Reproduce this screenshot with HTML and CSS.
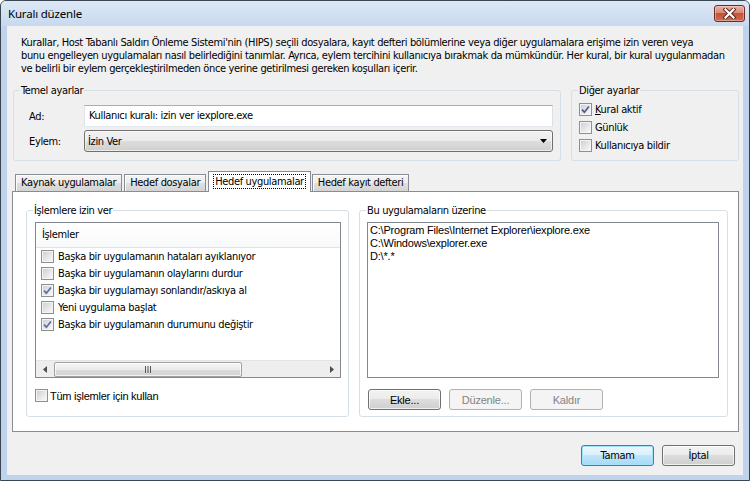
FILE: index.html
```html
<!DOCTYPE html>
<html lang="tr">
<head>
<meta charset="utf-8">
<title>Kuralı düzenle</title>
<link rel="stylesheet" href="styles.css">
</head>
<body>
<div class="window">
  <div class="titlebar">
    <span class="title">Kuralı düzenle</span>
    <span class="close">
      <svg width="15" height="11" viewBox="0 0 15 11"><path d="M3.5 1.5 L11.5 9.5 M11.5 1.5 L3.5 9.5" stroke="#5a211b" stroke-width="4" stroke-linecap="square" fill="none"/><path d="M3.5 1.5 L11.5 9.5 M11.5 1.5 L3.5 9.5" stroke="#ffffff" stroke-width="2.2" stroke-linecap="square" fill="none"/></svg>
    </span>
  </div>
  <div class="client">
    <p class="desc">Kurallar, Host Tabanlı Saldırı Önleme Sistemi'nin (HIPS) seçili dosyalara, kayıt defteri bölümlerine veya diğer uygulamalara erişime izin veren veya<br>bunu engelleyen uygulamaları nasıl belirlediğini tanımlar. Ayrıca, eylem tercihini kullanıcıya bırakmak da mümkündür. Her kural, bir kural uygulanmadan<br>ve belirli bir eylem gerçekleştirilmeden önce yerine getirilmesi gereken koşulları içerir.</p>

    <div class="toprow">
      <fieldset class="group basic">
        <legend>Temel ayarlar</legend>
        <div class="basic-body">
          <div class="frow">
            <span class="flabel">Ad:</span>
            <div class="textbox">Kullanıcı kuralı: izin ver iexplore.exe</div>
          </div>
          <div class="frow">
            <span class="flabel">Eylem:</span>
            <div class="combo">
              <span class="combo-text">İzin Ver</span>
              <svg class="combo-arrow" width="8" height="5" viewBox="0 0 8 5"><path d="M0 0 H7 L3.5 4 Z" fill="#000"/></svg>
            </div>
          </div>
        </div>
      </fieldset>
      <fieldset class="group other">
        <legend>Diğer ayarlar</legend>
        <div class="other-body">
          <div class="check"><span class="cb"><svg width="11" height="11" viewBox="0 0 11 11"><path d="M2 5.6 L4.4 8.2 L8.9 2.4" fill="none" stroke="#4b5e8e" stroke-width="1.7"/></svg></span><span><u>K</u>ural aktif</span></div>
          <div class="check"><span class="cb"></span><span>Günlük</span></div>
          <div class="check"><span class="cb"></span><span>Kullanıcıya bildir</span></div>
        </div>
      </fieldset>
    </div>

    <div class="tabs">
      <div class="tab">Kaynak uygulamalar</div>
      <div class="tab">Hedef dosyalar</div>
      <div class="tab active"><span class="focus">Hedef uygulamalar</span></div>
      <div class="tab">Hedef kayıt defteri</div>
    </div>
    <div class="tabpanel">
      <fieldset class="group ops">
        <legend>İşlemlere izin ver</legend>
        <div class="ops-body">
          <div class="listview">
            <div class="lv-header">İşlemler</div>
            <ul class="lv-items">
              <li><span class="cb"></span>Başka bir uygulamanın hataları ayıklanıyor</li>
              <li><span class="cb"></span>Başka bir uygulamanın olaylarını durdur</li>
              <li><span class="cb"><svg width="11" height="11" viewBox="0 0 11 11"><path d="M2 5.6 L4.4 8.2 L8.9 2.4" fill="none" stroke="#5d6f9c" stroke-width="1.7"/></svg></span>Başka bir uygulamayı sonlandır/askıya al</li>
              <li><span class="cb"></span>Yeni uygulama başlat</li>
              <li><span class="cb"><svg width="11" height="11" viewBox="0 0 11 11"><path d="M2 5.6 L4.4 8.2 L8.9 2.4" fill="none" stroke="#5d6f9c" stroke-width="1.7"/></svg></span>Başka bir uygulamanın durumunu değiştir</li>
            </ul>
            <div class="hscroll">
              <span class="sb-arrow"><svg width="4" height="7" viewBox="0 0 4 7"><path d="M4 0 V7 L0 3.5 Z" fill="#4d4d4d"/></svg></span>
              <span class="sb-thumb"><svg width="8" height="7" viewBox="0 0 8 7"><path d="M1.5 0 V7 M4 0 V7 M6.5 0 V7" stroke="#555" stroke-width="1"/></svg></span>
              <span class="sb-track"></span>
              <span class="sb-arrow"><svg width="4" height="7" viewBox="0 0 4 7"><path d="M0 0 V7 L4 3.5 Z" fill="#4d4d4d"/></svg></span>
            </div>
          </div>
          <div class="check all"><span class="cb"></span><span>Tüm işlemler için kullan</span></div>
        </div>
      </fieldset>
      <fieldset class="group apps">
        <legend>Bu uygulamaların üzerine</legend>
        <div class="apps-body">
          <div class="listbox">
            <div>C:\Program Files\Internet Explorer\iexplore.exe</div>
            <div>C:\Windows\explorer.exe</div>
            <div>D:\*.*</div>
          </div>
          <div class="btnrow">
            <button class="btn sans">Ekle...</button>
            <button class="btn sans disabled">Düzenle...</button>
            <button class="btn sans disabled">Kaldır</button>
          </div>
        </div>
      </fieldset>
    </div>

    <div class="dlgbtns">
      <button class="btn default">Tamam</button>
      <button class="btn">İptal</button>
    </div>
  </div>
</div>
</body>
</html>
```

FILE: styles.css
```css
* { box-sizing: border-box; }
html, body { margin: 0; padding: 0; }
body {
  width: 750px;
  height: 481px;
  overflow: hidden;
  background: #ffffff;
  font-family: "DejaVu Sans Condensed", "DejaVu Sans", sans-serif;
  font-stretch: semi-condensed;
  font-size: 11px;
  letter-spacing: -0.35px;
  color: #000;
}

.window {
  width: 750px;
  height: 481px;
  border: 1px solid #3a4554;
  border-radius: 6px 6px 0 0;
  background: #bfd3ec;
  display: flex;
  flex-direction: column;
}

.titlebar {
  height: 25px;
  flex: none;
  display: flex;
  align-items: flex-start;
  padding: 0 4px 0 7px;
  background: linear-gradient(#dde8f5, #c8d9ee);
  border-radius: 5px 5px 0 0;
}
.title {
  font-family: "Noto Sans", "Open Sans", sans-serif;
  font-stretch: normal;
  font-size: 11.5px;
  letter-spacing: -0.2px;
  line-height: 25px;
}
.close {
  margin-left: auto;
  margin-top: 4px;
  width: 31px;
  height: 17px;
  border: 1px solid #6d2d26;
  border-radius: 3px;
  background: linear-gradient(#eab0a3, #d98a78 45%, #c4533b 50%, #cf6a52);
  box-shadow: inset 0 0 0 1px rgba(255, 220, 210, 0.45);
  display: flex;
  align-items: center;
  justify-content: center;
}

.client {
  flex: 1;
  margin: 0 6px 5px;
  background: #f0f0f0;
  display: flex;
  flex-direction: column;
}

.desc {
  margin: 10px 14px 0;
  line-height: 13px;
  white-space: nowrap;
}

/* group boxes */
.group {
  margin: 0;
  padding: 0;
  border: 1px solid #d5dfe5;
  border-radius: 3px;
  min-width: 0;
}
.group legend {
  margin-left: 6px;
  padding: 0 1px;
  line-height: 13px;
}

.toprow {
  display: flex;
  gap: 10px;
  margin: 9px 4px 0 6px;
}
.basic { flex: 1; }
.basic-body {
  padding: 8px 7px 8px 15px;
  display: flex;
  flex-direction: column;
  gap: 3px;
}
.frow {
  display: flex;
  align-items: center;
  height: 22px;
}
.flabel { width: 55px; flex: none; }
.textbox {
  flex: 1;
  height: 22px;
  border: 1px solid;
  border-color: #abadb3 #dbdfe6 #e3e9ef #e2e3ea;
  background: #fff;
  padding: 0 4px;
  line-height: 20px;
}
.combo {
  flex: 1;
  height: 22px;
  border: 1px solid #707070;
  border-radius: 3px;
  background: linear-gradient(#f2f2f2, #ebebeb 50%, #dddddd 50%, #cfcfcf);
  box-shadow: inset 0 0 0 1px rgba(255, 255, 255, 0.6);
  display: flex;
  align-items: center;
  padding: 0 4px 0 3px;
}
.combo-text { flex: 1; }
.combo-arrow { display: block; }

.other { width: 168px; flex: none; }
.other-body { padding: 3px 7px 0; }

.check {
  display: flex;
  align-items: center;
  gap: 3px;
  height: 18px;
}
.cb {
  width: 13px;
  height: 13px;
  flex: none;
  border: 1px solid #8e8f8f;
  background: linear-gradient(135deg, #c9ccd2, #eeeeef 70%, #fafafa);
  box-shadow: inset 0 0 0 1px #f4f4f4;
  display: flex;
  align-items: center;
  justify-content: center;
}
.cb svg { display: block; }

/* tabs */
.tabs {
  display: flex;
  align-items: flex-end;
  height: 20px;
  margin: 10px 4px 0 5px;
  padding-left: 3px;
  gap: 2px;
  position: relative;
  z-index: 1;
}
.tab {
  height: 17px;
  border: 1px solid #898c95;
  border-bottom: none;
  padding: 0 5px;
  line-height: 16px;
  background: linear-gradient(#f4f4f4, #ececec 50%, #e0e0e0 50%, #d4d4d4);
  box-shadow: inset 1px 1px 0 #fcfcfc;
  white-space: nowrap;
}
.tab.active {
  height: 21px;
  margin: 0 -1px -1px 0;
  padding: 2px 4px 0;
  background: #fff;
  box-shadow: none;
}
.focus {
  display: block;
  border: 1px dotted #000;
  line-height: 13px;
  padding: 0 1px;
}

.tabpanel {
  height: 241px;
  margin: 0 4px 0 5px;
  border: 1px solid #898c95;
  background: #fff;
  display: flex;
  gap: 10px;
  padding: 12px 10px 14px 13px;
}
.ops { width: 323px; flex: none; }
.apps { flex: 1; }
.ops-body { padding: 5px 7px 0 8px; }
.apps-body { padding: 5px 8px 0 7px; }

.listview {
  height: 156px;
  border: 1px solid #828790;
  background: #fff;
  display: flex;
  flex-direction: column;
}
.lv-header {
  height: 25px;
  flex: none;
  padding-left: 6px;
  line-height: 24px;
  border-bottom: 1px solid #e2e3e5;
  background: linear-gradient(#ffffff, #f8f9fa);
}
.lv-items {
  flex: 1;
  list-style: none;
  margin: 0;
  padding: 0 0 0 5px;
}
.lv-items li {
  height: 17px;
  display: flex;
  align-items: center;
  gap: 4px;
  white-space: nowrap;
}
.hscroll {
  height: 17px;
  flex: none;
  display: flex;
  align-items: center;
  background: #eeeeee;
  border-top: 1px solid #e4e4e4;
}
.sb-arrow {
  width: 17px;
  height: 16px;
  display: flex;
  align-items: center;
  justify-content: center;
}
.sb-thumb {
  width: 188px;
  height: 15px;
  margin-left: 1px;
  border: 1px solid #9ea1a6;
  border-radius: 2px;
  background: linear-gradient(#f6f6f6, #eaeaea 50%, #dcdcdc 50%, #d3d3d3);
  box-shadow: inset 0 0 0 1px rgba(255, 255, 255, 0.7);
  display: flex;
  align-items: center;
  justify-content: center;
}
.sb-thumb svg { display: block; }
.sb-track { flex: 1; }

.check.all {
  margin-top: 11px;
  height: 13px;
  gap: 2px;
  font-family: "Liberation Sans", Arial, sans-serif;
  font-stretch: normal;
  letter-spacing: -0.25px;
}

.listbox {
  height: 156px;
  border: 1px solid #828790;
  background: #fff;
  padding: 1px 2px;
  line-height: 13px;
  font-family: "Liberation Sans", Arial, sans-serif;
  font-stretch: normal;
  letter-spacing: -0.2px;
  white-space: nowrap;
}

.btnrow {
  margin-top: 11px;
  display: flex;
  gap: 8px;
  padding-left: 1px;
}

.btn {
  width: 73px;
  height: 21px;
  padding: 0;
  border: 1px solid #707070;
  border-radius: 3px;
  background: linear-gradient(#f2f2f2, #ebebeb 50%, #dddddd 50%, #cfcfcf);
  box-shadow: inset 0 0 0 1px rgba(255, 255, 255, 0.7);
  font-family: "DejaVu Sans Condensed", "DejaVu Sans", sans-serif;
  font-stretch: semi-condensed;
  font-size: 11px;
  letter-spacing: -0.35px;
  color: #000;
}
.btn.sans {
  font-family: "Liberation Sans", Arial, sans-serif;
  font-stretch: normal;
  letter-spacing: -0.2px;
}
.btn.disabled {
  border-color: #adb2b5;
  background: #f4f4f4;
  box-shadow: none;
  color: #838383;
}
.btn.default {
  border-color: #3c7fb1;
  background: linear-gradient(#eaf6fd, #d9f0fc 50%, #bee6fd 50%, #a7d9f5);
  box-shadow: inset 0 0 0 1px #a3e2fa;
}

.dlgbtns {
  margin: 13px 8px 0 0;
  display: flex;
  justify-content: flex-end;
  gap: 8px;
}
```
